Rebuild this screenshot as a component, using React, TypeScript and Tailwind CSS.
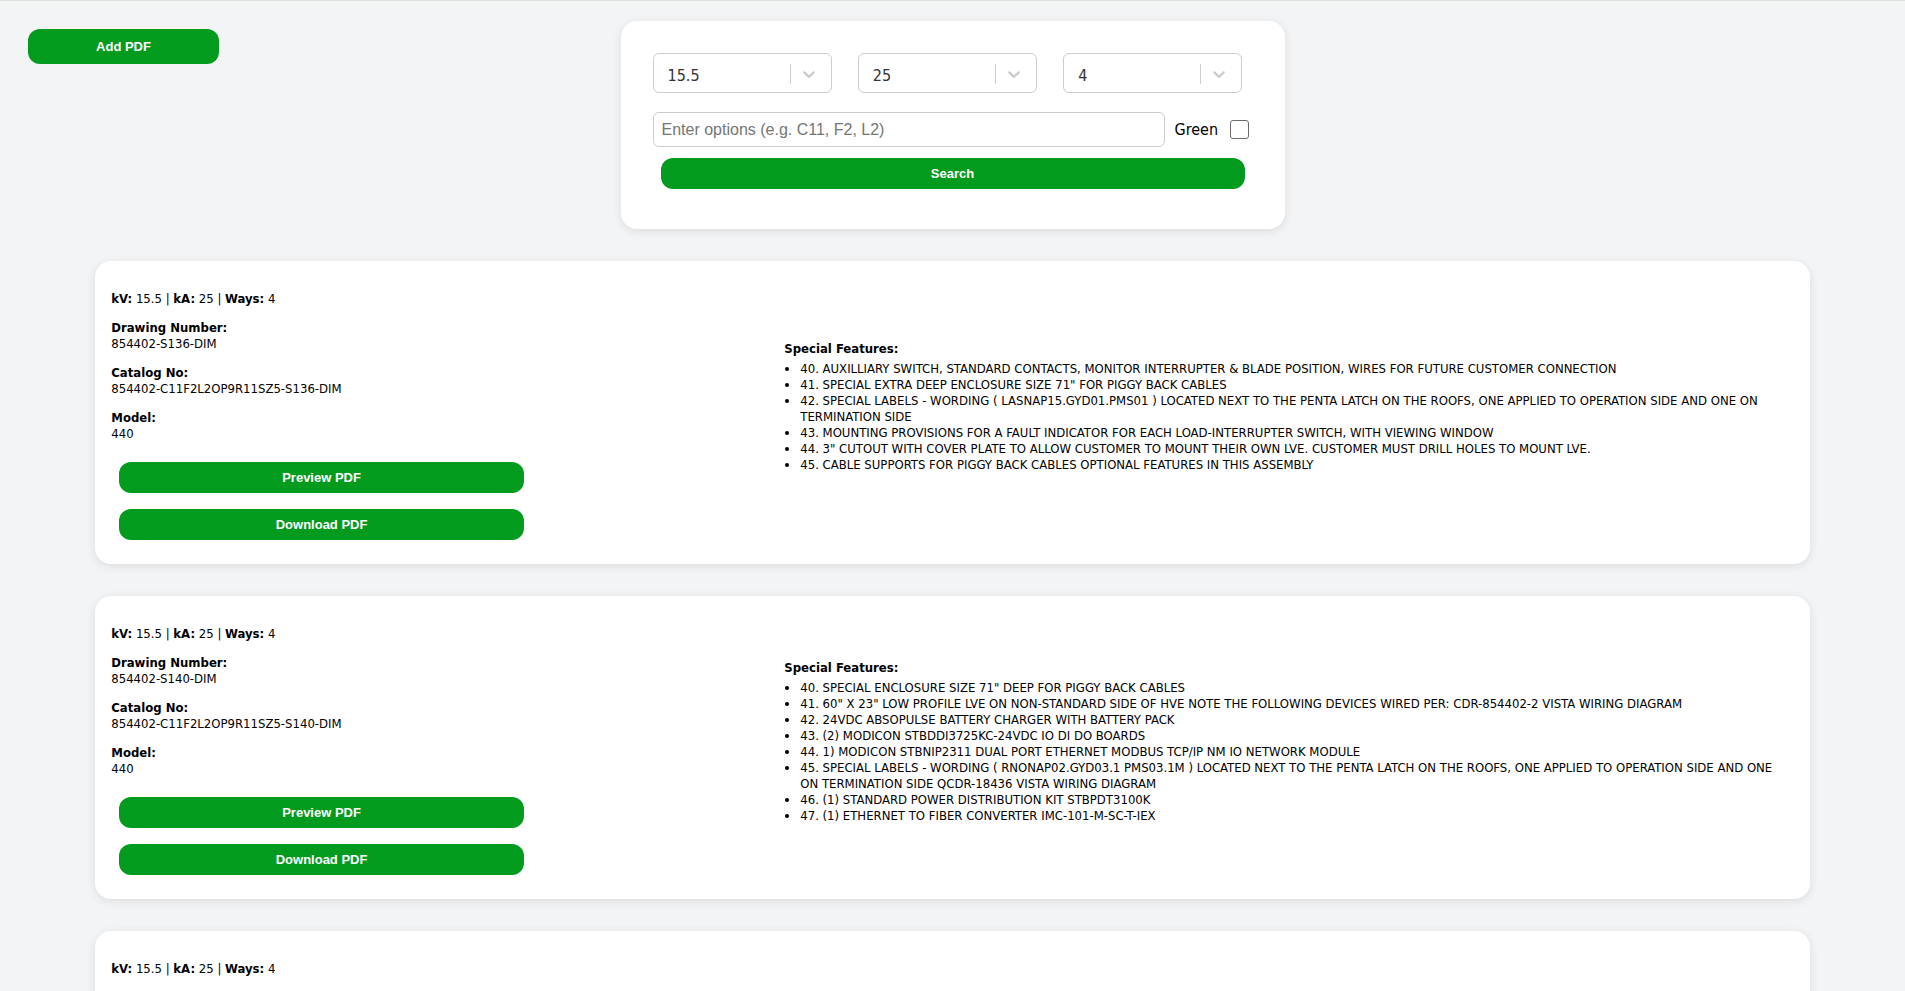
import React, { useState } from "react";

type Unit = {
  kv: string;
  ka: string;
  ways: string;
  drawing: string;
  catalog: string;
  model: string;
  features: string[];
};

const units: Unit[] = [
  {
    kv: "15.5",
    ka: "25",
    ways: "4",
    drawing: "854402-S136-DIM",
    catalog: "854402-C11F2L2OP9R11SZ5-S136-DIM",
    model: "440",
    features: [
      "40. AUXILLIARY SWITCH, STANDARD CONTACTS, MONITOR INTERRUPTER & BLADE POSITION, WIRES FOR FUTURE CUSTOMER CONNECTION",
      '41. SPECIAL EXTRA DEEP ENCLOSURE SIZE 71" FOR PIGGY BACK CABLES',
      "42. SPECIAL LABELS - WORDING ( LASNAP15.GYD01.PMS01 ) LOCATED NEXT TO THE PENTA LATCH ON THE ROOFS, ONE APPLIED TO OPERATION SIDE AND ONE ON TERMINATION SIDE",
      "43. MOUNTING PROVISIONS FOR A FAULT INDICATOR FOR EACH LOAD-INTERRUPTER SWITCH, WITH VIEWING WINDOW",
      '44. 3" CUTOUT WITH COVER PLATE TO ALLOW CUSTOMER TO MOUNT THEIR OWN LVE. CUSTOMER MUST DRILL HOLES TO MOUNT LVE.',
      "45. CABLE SUPPORTS FOR PIGGY BACK CABLES OPTIONAL FEATURES IN THIS ASSEMBLY",
    ],
  },
  {
    kv: "15.5",
    ka: "25",
    ways: "4",
    drawing: "854402-S140-DIM",
    catalog: "854402-C11F2L2OP9R11SZ5-S140-DIM",
    model: "440",
    features: [
      '40. SPECIAL ENCLOSURE SIZE 71" DEEP FOR PIGGY BACK CABLES',
      '41. 60" X 23" LOW PROFILE LVE ON NON-STANDARD SIDE OF HVE NOTE THE FOLLOWING DEVICES WIRED PER: CDR-854402-2 VISTA WIRING DIAGRAM',
      "42. 24VDC ABSOPULSE BATTERY CHARGER WITH BATTERY PACK",
      "43. (2) MODICON STBDDI3725KC-24VDC IO DI DO BOARDS",
      "44. 1) MODICON STBNIP2311 DUAL PORT ETHERNET MODBUS TCP/IP NM IO NETWORK MODULE",
      "45. SPECIAL LABELS - WORDING ( RNONAP02.GYD03.1 PMS03.1M ) LOCATED NEXT TO THE PENTA LATCH ON THE ROOFS, ONE APPLIED TO OPERATION SIDE AND ONE ON TERMINATION SIDE QCDR-18436 VISTA WIRING DIAGRAM",
      "46. (1) STANDARD POWER DISTRIBUTION KIT STBPDT3100K",
      "47. (1) ETHERNET TO FIBER CONVERTER IMC-101-M-SC-T-IEX",
    ],
  },
  {
    kv: "15.5",
    ka: "25",
    ways: "4",
    drawing: "854402-S142-DIM",
    catalog: "854402-C11F2L2OP9R11SZ5-S142-DIM",
    model: "440",
    features: ['40. SPECIAL ENCLOSURE SIZE 71" DEEP FOR PIGGY BACK CABLES'],
  },
];

function GreenButton({ children, className }: { children: React.ReactNode; className: string }) {
  return (
    <button
      type="button"
      className={`cursor-pointer rounded-xl bg-[#029b1e] text-center font-['Liberation_Sans',Arial,sans-serif] text-[13px] font-bold text-white hover:bg-[#02861a] ${className}`}
    >
      {children}
    </button>
  );
}

function Picker({ label, initial, options }: { label: string; initial: string; options: string[] }) {
  const [value, setValue] = useState(initial);
  return (
    <div className="grid grid-cols-[1fr_auto] items-center">
      <select
        aria-label={label}
        value={value}
        onChange={(e) => setValue(e.target.value)}
        className="col-span-2 col-start-1 row-start-1 h-10 w-full appearance-none rounded-md border border-[#cccccc] bg-white pt-1.5 pl-3.5 text-base text-[#333333]"
      >
        {options.map((o) => (
          <option key={o}>{o}</option>
        ))}
      </select>
      <span className="pointer-events-none col-start-2 row-start-1 flex items-center pt-px pr-[13px]">
        <span className="h-5 w-px bg-[#cccccc]" />
        <svg viewBox="0 0 20 20" className="ml-2 size-5 fill-[#cccccc]" aria-hidden="true">
          <path
            d="M4.516 7.548c0.436-0.446 1.043-0.481 1.576 0l3.908 3.747 3.908-3.747c0.533-0.481 1.141-0.446 1.574 0 0.436 0.445 0.408 1.197 0 1.615-0.406 0.418-4.695 4.502-4.695 4.502-0.217 0.223-0.502 0.335-0.787 0.335s-0.57-0.112-0.789-0.335c0 0-4.287-4.084-4.695-4.502s-0.436-1.17 0-1.615z"
          />
        </svg>
      </span>
    </div>
  );
}

function Field({ label, value }: { label: string; value: string }) {
  return (
    <p>
      <strong className="block">{label}</strong>
      {value}
    </p>
  );
}

function SearchForm() {
  const [green, setGreen] = useState(false);
  return (
    <form
      onSubmit={(e) => e.preventDefault()}
      className="flex flex-col rounded-2xl bg-white p-8 shadow-[0_2px_10px_rgba(0,0,0,0.1)]"
    >
      <div className="grid grid-cols-3 gap-[26px] pr-2.5">
        <Picker label="kV" initial="15.5" options={["15.5", "27", "38"]} />
        <Picker label="kA" initial="25" options={["12.5", "25"]} />
        <Picker label="Ways" initial="4" options={["2", "3", "4", "5", "6"]} />
      </div>
      <div className="mt-[19px] flex items-center">
        <input
          type="text"
          aria-label="Options"
          placeholder="Enter options (e.g. C11, F2, L2)"
          className="h-[35px] w-[512px] min-w-0 rounded-md border border-[#cccccc] bg-white px-2 font-['Liberation_Sans',Arial,sans-serif] text-base placeholder:text-[#757575]"
        />
        <label htmlFor="green" className="ml-2.5 text-base">
          Green
        </label>
        <input
          id="green"
          type="checkbox"
          checked={green}
          onChange={(e) => setGreen(e.target.checked)}
          className="ml-3 size-[19px] shrink-0 appearance-none rounded-[3px] border border-[#6b6b6b] bg-white checked:bg-[#029b1e]"
        />
      </div>
      <GreenButton className="mx-2 mt-[11px] mb-2 h-[31px]">Search</GreenButton>
    </form>
  );
}

function ResultCard({ unit }: { unit: Unit }) {
  return (
    <article className="flex items-center rounded-2xl bg-white p-4 text-[13px] leading-4 shadow-[0_2px_10px_rgba(0,0,0,0.1)]">
      <div className="w-2/5 shrink-0">
        <div className="flex flex-col gap-[13px] pt-3.5">
          <p>
            <strong>kV:</strong> {unit.kv} | <strong>kA:</strong> {unit.ka} | <strong>Ways:</strong> {unit.ways}
          </p>
          <Field label="Drawing Number:" value={unit.drawing} />
          <Field label="Catalog No:" value={unit.catalog} />
          <Field label="Model:" value={unit.model} />
        </div>
        <div className="mt-3 flex w-5/8 flex-col gap-4 p-2">
          <GreenButton className="h-[31px]">Preview PDF</GreenButton>
          <GreenButton className="h-[31px]">Download PDF</GreenButton>
        </div>
      </div>
      <div className="flex-1">
        <strong>Special Features:</strong>
        <ul className="mt-1 mb-3 list-disc pr-2 pl-4">
          {unit.features.map((f) => (
            <li key={f}>{f}</li>
          ))}
        </ul>
      </div>
    </article>
  );
}

export default function App() {
  return (
    <div className="min-h-screen border-t border-[#dfe1dc] bg-[#f3f4f6] font-['DejaVu_Sans_Condensed','DejaVu_Sans',sans-serif] text-black">
      <header className="grid grid-cols-[1fr_minmax(0,664px)_1fr] items-start pt-5">
        <GreenButton className="mt-2 ml-7 h-[35px] w-[191px]">Add PDF</GreenButton>
        <SearchForm />
      </header>
      <main className="mx-auto flex w-9/10 flex-col gap-8 py-8">
        {units.map((u) => (
          <ResultCard key={u.drawing} unit={u} />
        ))}
      </main>
    </div>
  );
}
